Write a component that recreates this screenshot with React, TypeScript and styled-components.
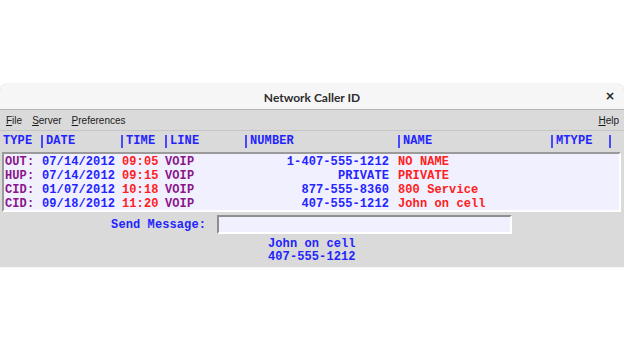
import styled, { createGlobalStyle } from 'styled-components';

const GlobalStyle = createGlobalStyle`
  html, body {
    margin: 0;
    padding: 0;
    background: #ffffff;
  }
`;

interface Call {
  type: string;
  date: string;
  time: string;
  line: string;
  number: string;
  name: string;
}

const calls: Call[] = [
  { type: 'OUT:', date: '07/14/2012', time: '09:05', line: 'VOIP', number: '1-407-555-1212', name: 'NO NAME' },
  { type: 'HUP:', date: '07/14/2012', time: '09:15', line: 'VOIP', number: 'PRIVATE', name: 'PRIVATE' },
  { type: 'CID:', date: '01/07/2012', time: '10:18', line: 'VOIP', number: '877-555-8360', name: '800 Service' },
  { type: 'CID:', date: '09/18/2012', time: '11:20', line: 'VOIP', number: '407-555-1212', name: 'John on cell' },
];

const columns = [
  { label: 'TYPE', width: 38, bar: false },
  { label: 'DATE', width: 80, bar: true },
  { label: 'TIME', width: 44, bar: true },
  { label: 'LINE', width: 80, bar: true },
  { label: 'NUMBER', width: 153, bar: true },
  { label: 'NAME', width: 153, bar: true },
  { label: 'MTYPE', width: 58, bar: true },
];

const BLUE = '#2424ff';
const PURPLE = '#8a168a';
const RED = '#ff2020';

const Page = styled.div`
  height: 100vh;
  display: flex;
  align-items: center;
`;

const Window = styled.div`
  width: 624px;
  height: 183px;
  background: #dadada;
  border-radius: 7px 7px 0 0;
  overflow: hidden;
  display: flex;
  flex-direction: column;
  box-shadow: 0 0 2px rgba(0, 0, 0, 0.15);
`;

const TitleBar = styled.div`
  position: relative;
  height: 26px;
  box-sizing: border-box;
  padding-top: 1px;
  flex: none;
  background: #f6f6f6;
  border-bottom: 1px solid #b4b4b4;
  display: flex;
  align-items: center;
  justify-content: center;
  font-family: Lato, 'Noto Sans', sans-serif;
  font-size: 12px;
  font-weight: 700;
  color: #2e2e2e;
`;

const CloseButton = styled.span`
  position: absolute;
  right: 9px;
  top: 5px;
  font-family: 'DejaVu Sans', sans-serif;
  font-size: 12px;
  font-weight: 700;
  color: #222;
`;

const MenuBar = styled.div`
  height: 21px;
  flex: none;
  display: flex;
  align-items: center;
  padding: 1px 5px 0 6px;
  box-sizing: border-box;
  gap: 10px;
  border-bottom: 1px solid #c6c6c6;
  font-family: 'Liberation Sans', Arial, sans-serif;
  font-size: 10px;
  color: #1a1a1a;
`;

const MenuItem = styled.span<{ $right?: boolean }>`
  margin-left: ${p => (p.$right ? 'auto' : '0')};
  & u {
    text-decoration-thickness: 1px;
    text-underline-offset: 1px;
  }
`;

const Mono = styled.div`
  font-family: 'Liberation Mono', 'Courier New', monospace;
  font-size: 12px;
  font-weight: 700;
  letter-spacing: 0.1px;
  white-space: pre;
`;

const HeaderRow = styled(Mono)`
  height: 20px;
  flex: none;
  display: flex;
  align-items: center;
  padding-left: 3px;
  color: ${BLUE};
`;

const HeaderCell = styled.div<{ $bar: boolean }>`
  display: flex;
  align-items: center;
  gap: 3px;
  &::before {
    content: '';
    display: ${p => (p.$bar ? 'block' : 'none')};
    width: 2px;
    height: 13px;
    background: #4848ff;
  }
`;

const EndBar = styled.div`
  width: 2px;
  height: 13px;
  background: #4848ff;
`;

const Table = styled.div`
  margin: 1px 3px 0 2px;
  height: 55px;
  flex: none;
  background: #f0f0ff;
  border-top: 2px solid #9a9a9a;
  border-left: 2px solid #9a9a9a;
  border-right: 2px solid #ffffff;
  border-bottom: 2px solid #ffffff;
  padding-top: 1px;
`;

const Row = styled(Mono)`
  height: 14px;
  line-height: 14px;
  display: flex;
  padding-left: 1px;
`;

const Cell = styled.span<{ $w: number; $color: string; $right?: boolean }>`
  width: ${p => p.$w}px;
  flex: none;
  color: ${p => p.$color};
  text-align: ${p => (p.$right ? 'right' : 'left')};
  padding-right: ${p => (p.$right ? '9px' : '0')};
  box-sizing: border-box;
`;

const SendRow = styled.div`
  display: flex;
  align-items: center;
  margin-top: 3px;
  height: 19px;
`;

const SendLabel = styled(Mono)`
  width: 206px;
  text-align: right;
  color: ${BLUE};
  padding-right: 11px;
  box-sizing: content-box;
`;

const SendInput = styled.div`
  width: 291px;
  height: 15px;
  background: #f0f0ff;
  border-top: 2px solid #8e8e8e;
  border-left: 2px solid #8e8e8e;
  border-right: 2px solid #ffffff;
  border-bottom: 2px solid #ffffff;
`;

const Status = styled(Mono)`
  margin-top: 4px;
  padding-left: 268px;
  color: ${BLUE};
  line-height: 13px;
`;

export default function App() {
  return (
    <>
      <GlobalStyle />
      <Page>
        <Window>
          <TitleBar>
            Network Caller ID
            <CloseButton>×</CloseButton>
          </TitleBar>
          <MenuBar>
            <MenuItem><u>F</u>ile</MenuItem>
            <MenuItem><u>S</u>erver</MenuItem>
            <MenuItem><u>P</u>references</MenuItem>
            <MenuItem $right><u>H</u>elp</MenuItem>
          </MenuBar>
          <HeaderRow>
            {columns.map(c => (
              <HeaderCell key={c.label} $bar={c.bar} style={{ width: c.width }}>
                {c.label}
              </HeaderCell>
            ))}
            <EndBar />
          </HeaderRow>
          <Table>
            {calls.map((c, i) => (
              <Row key={i}>
                <Cell $w={37} $color={PURPLE}>{c.type}</Cell>
                <Cell $w={80} $color={BLUE}>{c.date}</Cell>
                <Cell $w={43} $color={RED}>{c.time}</Cell>
                <Cell $w={36} $color={PURPLE}>{c.line}</Cell>
                <Cell $w={197} $color={BLUE} $right>{c.number}</Cell>
                <Cell $w={150} $color={RED}>{c.name}</Cell>
              </Row>
            ))}
          </Table>
          <SendRow>
            <SendLabel>Send Message:</SendLabel>
            <SendInput />
          </SendRow>
          <Status>
            John on cell{'\n'}407-555-1212
          </Status>
        </Window>
      </Page>
    </>
  );
}
